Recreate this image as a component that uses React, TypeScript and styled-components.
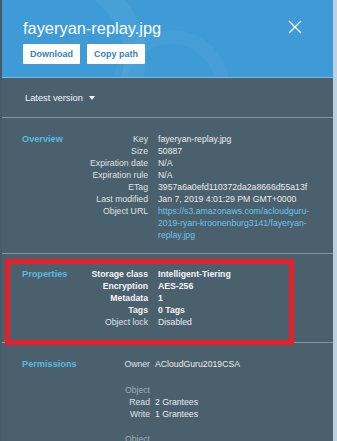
import React from 'react';
import styled, { createGlobalStyle } from 'styled-components';

const GlobalStyle = createGlobalStyle`
  html, body {
    margin: 0;
    padding: 0;
    background: #bdd2e1;
    font-family: "Liberation Sans", Arial, sans-serif;
  }
`;

const Page = styled.div`
  width: 337px;
  height: 441px;
  overflow: hidden;
  background: #bdd2e1;
`;

const Panel = styled.div`
  position: relative;
  width: 333px;
  height: 441px;
  overflow: hidden;
  background: #4b606d;
  border-left: 2px solid #465a67;
  box-sizing: border-box;
`;

const Header = styled.header`
  position: relative;
  height: 78px;
  box-sizing: border-box;
  padding: 19px 31px 0 21px;
  background: #3e9bd6;
  border-bottom: 1px solid #7db9e0;
  overflow: hidden;

  &::before {
    content: '';
    position: absolute;
    left: -70px;
    top: -40px;
    width: 170px;
    height: 150px;
    border-radius: 50%;
    border: 22px solid rgba(255, 255, 255, 0.05);
  }
  &::after {
    content: '';
    position: absolute;
    left: 110px;
    top: 30px;
    width: 90px;
    height: 90px;
    border-radius: 50%;
    border: 14px solid rgba(255, 255, 255, 0.04);
  }
`;

const TitleRow = styled.div`
  position: relative;
  z-index: 1;
  display: flex;
  justify-content: space-between;
  align-items: flex-start;
`;

const Title = styled.h1`
  margin: 0;
  font-size: 16.4px;
  line-height: 19px;
  font-weight: 400;
  color: #fff;
`;

const Close = styled.button`
  background: none;
  border: 0;
  padding: 0;
  margin-top: 1px;
  width: 14px;
  height: 14px;
  display: flex;
  cursor: pointer;
`;

const Buttons = styled.div`
  position: relative;
  z-index: 1;
  display: flex;
  gap: 7px;
  margin-top: 6px;
`;

const Button = styled.button`
  height: 20px;
  padding: 0 7px;
  background: #fff;
  border: 0;
  border-radius: 1px;
  color: #3a7fb6;
  font-family: "Liberation Sans", Arial, sans-serif;
  font-size: 9px;
  font-weight: 700;
  cursor: pointer;
`;

const VersionBar = styled.div`
  height: 39px;
  display: flex;
  align-items: center;
  gap: 6px;
  padding-left: 23px;
  border-bottom: 1px solid #8797a2;
  color: #f1f4f6;
  font-size: 9.3px;
`;

const Caret = styled.span`
  width: 0;
  height: 0;
  border-left: 3px solid transparent;
  border-right: 3px solid transparent;
  border-top: 4px solid #f1f4f6;
`;

const Section = styled.section<{ $top: number; $bottom: number; $last?: boolean }>`
  display: flex;
  padding: ${p => p.$top}px 16px ${p => p.$bottom}px 20px;
  border-bottom: ${p => (p.$last ? '0' : '1px solid #8797a2')};
`;

const Heading = styled.h2`
  flex: 0 0 60px;
  margin: 0;
  font-size: 9.2px;
  line-height: 12px;
  font-weight: 700;
  color: #58b9e1;
`;

const Details = styled.dl<{ $label: number; $gap: number }>`
  flex: 1;
  margin: 0;
  display: grid;
  grid-template-columns: ${p => p.$label}px 1fr;
  column-gap: ${p => p.$gap}px;
  align-content: start;
  font-size: 8.7px;
  line-height: 12px;
`;

const Label = styled.dt<{ $strong?: boolean }>`
  text-align: right;
  color: ${p => (p.$strong ? '#f4f6f8' : '#dce2e6')};
  font-weight: ${p => (p.$strong ? 700 : 400)};
  white-space: nowrap;
`;

const Value = styled.dd<{ $strong?: boolean }>`
  margin: 0;
  color: ${p => (p.$strong ? '#f4f6f8' : '#e8ecef')};
  font-weight: ${p => (p.$strong ? 700 : 400)};
  word-break: break-word;
`;

const Link = styled.a`
  color: #6cc3e9;
  text-decoration: none;
`;

const GroupTitle = styled.dt<{ $space: number }>`
  grid-column: 1;
  margin-top: ${p => p.$space}px;
  text-align: right;
  color: #9eacb6;
`;

const Highlight = styled.div`
  position: absolute;
  left: 3px;
  top: 259px;
  width: 289px;
  height: 86px;
  box-sizing: border-box;
  border: 5px solid #e5202a;
  pointer-events: none;
`;

const overview: [string, React.ReactNode][] = [
  ['Key', 'fayeryan-replay.jpg'],
  ['Size', '50887'],
  ['Expiration date', 'N/A'],
  ['Expiration rule', 'N/A'],
  ['ETag', '3957a6a0efd110372da2a8666d55a13f'],
  ['Last modified', 'Jan 7, 2019 4:01:29 PM GMT+0000'],
  [
    'Object URL',
    <Link href="#">
      https://s3.amazonaws.com/acloudguru-
      <br />
      2019-ryan-kroonenburg3141/fayeryan-
      <br />
      replay.jpg
    </Link>,
  ],
];

const properties: [string, string, boolean][] = [
  ['Storage class', 'Intelligent-Tiering', true],
  ['Encryption', 'AES-256', true],
  ['Metadata', '1', true],
  ['Tags', '0 Tags', true],
  ['Object lock', 'Disabled', false],
];

export default function App() {
  return (
    <Page>
      <GlobalStyle />
      <Panel>
        <Header>
          <TitleRow>
            <Title>fayeryan-replay.jpg</Title>
            <Close aria-label="Close">
              <svg width="14" height="14" viewBox="0 0 14 14">
                <path d="M1 1 L13 13 M13 1 L1 13" stroke="#fff" strokeWidth="1.3" fill="none" />
              </svg>
            </Close>
          </TitleRow>
          <Buttons>
            <Button>Download</Button>
            <Button>Copy path</Button>
          </Buttons>
        </Header>

        <VersionBar>
          Latest version <Caret />
        </VersionBar>

        <Section $top={15} $bottom={12}>
          <Heading>Overview</Heading>
          <Details $label={66} $gap={10}>
            {overview.map(([k, v]) => (
              <React.Fragment key={k}>
                <Label>{k}</Label>
                <Value>{v}</Value>
              </React.Fragment>
            ))}
          </Details>
        </Section>

        <Section $top={14} $bottom={14}>
          <Heading>Properties</Heading>
          <Details $label={66} $gap={10}>
            {properties.map(([k, v, strong]) => (
              <React.Fragment key={k}>
                <Label $strong={strong}>{k}</Label>
                <Value $strong={strong}>{v}</Value>
              </React.Fragment>
            ))}
          </Details>
        </Section>

        <Section $top={15} $bottom={0} $last>
          <Heading>Permissions</Heading>
          <Details $label={68} $gap={5}>
            <Label>Owner</Label>
            <Value>ACloudGuru2019CSA</Value>
            <GroupTitle $space={14}>Object</GroupTitle>
            <Value />
            <Label>Read</Label>
            <Value>2 Grantees</Value>
            <Label>Write</Label>
            <Value>1 Grantees</Value>
            <GroupTitle $space={13}>Object</GroupTitle>
            <Value />
          </Details>
        </Section>

        <Highlight />
      </Panel>
    </Page>
  );
}
